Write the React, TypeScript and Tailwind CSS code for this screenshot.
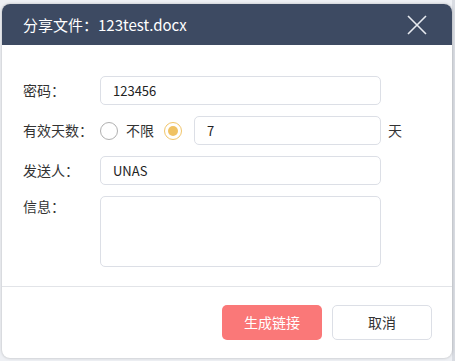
import React from "react";

export default function App() {
  const font = { fontFamily: '"Noto Sans CJK SC", "Noto Sans", sans-serif' };
  return (
    <div className="w-[455px] h-[361px] bg-[#eef0f4] pt-[4px] pl-[2px] overflow-hidden relative" style={font}>
      <div className="absolute right-0 top-0 w-[3px] h-full bg-[#d9dce2]" />
      <div className="w-[450px] h-[354px] bg-white rounded-[8px] overflow-hidden shadow-[0_0_3px_rgba(0,0,0,0.25)] flex flex-col relative">
        <div className="h-[41px] bg-[#3d4a62] flex items-center justify-between pl-[21px] pr-[25px] shrink-0">
          <span className="text-white text-[15px] leading-none">分享文件：123test.docx</span>
          <svg width="20" height="20" viewBox="0 0 20 20" className="block">
            <path d="M1 1 L19 19 M19 1 L1 19" stroke="#e8ebf0" strokeWidth="1.6" fill="none" />
          </svg>
        </div>
        <div className="flex flex-col gap-[11px] pt-[31px] pl-[21px] pr-[71px]">
          <div className="flex items-center h-[29px]">
            <div className="w-[77px] text-[14px] text-[#333]">密码：</div>
            <div className="flex-1 h-[29px] border border-[#dcdfe6] rounded-[5px] flex items-center px-[12px] text-[13px] text-[#222]">123456</div>
          </div>
          <div className="flex items-center h-[29px]">
            <div className="w-[77px] text-[14px] text-[#333]">有效天数：</div>
            <div className="w-[18px] h-[18px] rounded-full border border-[#b0b0b0] bg-white" />
            <span className="ml-[8px] text-[14px] text-[#333]">不限</span>
            <div className="ml-[10px] w-[18px] h-[18px] rounded-full border border-[#f1c56a] flex items-center justify-center">
              <div className="w-[10px] h-[10px] rounded-full bg-[#f0c263]" />
            </div>
            <div className="ml-[12px] flex-1 h-[29px] border border-[#dcdfe6] rounded-[5px] flex items-center px-[12px] text-[13px] text-[#222]">7</div>
            <span className="absolute left-[386px] text-[14px] text-[#333]">天</span>
          </div>
          <div className="flex items-center h-[29px]">
            <div className="w-[77px] text-[14px] text-[#333]">发送人：</div>
            <div className="flex-1 h-[29px] border border-[#dcdfe6] rounded-[5px] flex items-center px-[12px] text-[13px] text-[#222]">UNAS</div>
          </div>
          <div className="flex items-start">
            <div className="w-[77px] text-[14px] text-[#333] leading-[20px]">信息：</div>
            <div className="flex-1 h-[71px] border border-[#dcdfe6] rounded-[5px]" />
          </div>
        </div>
        <div className="mt-[19px] border-t border-[#e2e4e8]" />
        <div className="flex justify-end gap-[10px] pt-[18px] pr-[20px]">
          <button className="w-[100px] h-[35px] rounded-[5px] bg-[#fa7878] text-white text-[14px]">生成链接</button>
          <button className="w-[100px] h-[35px] rounded-[5px] bg-white border border-[#dcdfe6] text-[#333] text-[14px]">取消</button>
        </div>
      </div>
    </div>
  );
}
